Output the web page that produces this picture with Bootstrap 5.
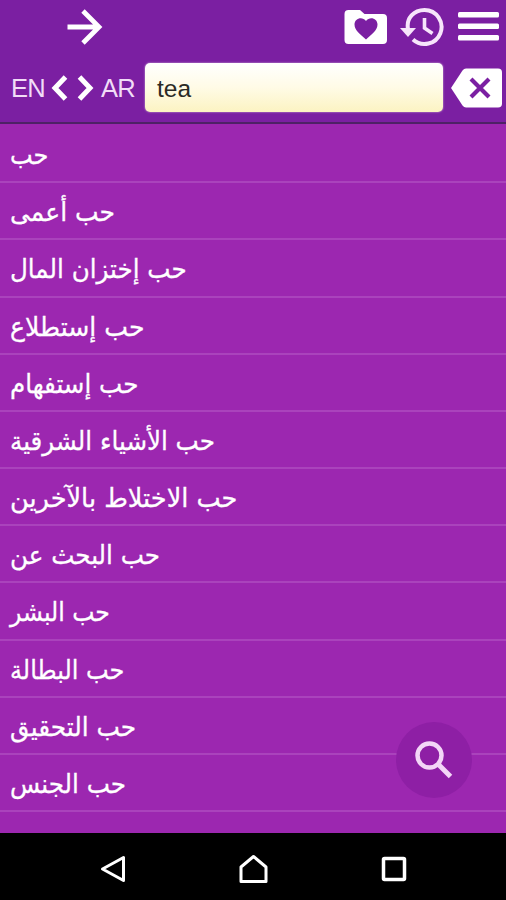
<!DOCTYPE html>
<html lang="en">
<head>
<meta charset="utf-8">
<meta name="viewport" content="width=device-width, initial-scale=1">
<title>Dictionary</title>
<link href="https://cdn.jsdelivr.net/npm/bootstrap@5.3.0/dist/css/bootstrap.min.css" rel="stylesheet">
<style>
body{background:#9c27b0;font-family:"Liberation Sans",Arial,sans-serif;height:900px;overflow:hidden}
.app-head{background:#7b1fa2;height:124px;border-bottom:2px solid #4e2166;flex:none}
.tools{height:54px;padding:0 6px 0 66px;gap:12px}
.searchrow{height:67px;padding:0 4px 0 11px}
.lang{color:#f1dcf7;font-size:25.500px;letter-spacing:-.7px;line-height:50px}
.query{width:298px;height:49px;border:0;border-radius:5px;padding:3px 12px 0;font-size:24.500px;line-height:46px;color:#2b2b26;background:linear-gradient(#fff,#fffbe6 50%,#fcf3c2);box-shadow:0 0 2px #d9c4dc}
.words{padding-top:2px}
.words .word{height:57.18px;padding:2px 10px 0;background:transparent;color:#fff;border:0;border-bottom:2px solid #aa43bc;border-radius:0;font-family:"DejaVu Sans",sans-serif;font-size:26px;line-height:55px;white-space:nowrap;-webkit-text-stroke:.3px #fff}
.word span{display:inline-block;transform-origin:0 50%;transform:scaleX(var(--fit,.945))}
.word:nth-child(1){--fit:.925}
.word:nth-child(2){--fit:.96}
.word:nth-child(4){--fit:.967}
.word:nth-child(7){--fit:.984}
.word:nth-child(9){--fit:.905}
.word:nth-child(10){--fit:.923}
.word:nth-child(11){--fit:.953}
.fab{left:396px;top:722px;width:76px;height:76px;background:#8e1fa5;border:0}
.sysbar{background:#000;height:67px;padding:5px 99px 0 99px;flex:none}
svg{display:block;flex:none}
</style>
<script src="https://cdn.jsdelivr.net/npm/bootstrap@5.3.0/dist/js/bootstrap.bundle.min.js"></script>
</head>
<body class="d-flex flex-column m-0 position-relative">
<header class="app-head">
  <div class="tools d-flex align-items-center">
    <svg width="38" height="38" viewBox="0 0 38 38" fill="none" stroke="#fff" stroke-width="4.8"><path d="M1.500 19H33M17 3l16 16-16 16"/></svg>
    <svg class="ms-auto" width="44" height="36" viewBox="0 0 44 36"><path d="M4.500 1H16l4.500 4H39q4 0 4 4v22q0 4-4 4H4.500q-4 0-4-4V5q0-4 4-4z" fill="#fff"/><path d="M22 30.500C17 26 10.500 21.500 10.500 15.500c0-6.500 8-8.500 11.500-3.500 3.500-5 11.500-3 11.500 3.500C33.500 21.500 27 26 22 30.500z" fill="#7b1fa2"/></svg>
    <svg width="46" height="40" viewBox="0 0 46 40" fill="none" stroke="#f7e5fb" stroke-width="4"><path d="M8 22C6 11 14 3 24.500 3A17 17 0 1 1 13 32.500"/><path d="M0 21h16l-8 9z" fill="#f7e5fb" stroke="none"/><path d="M24.500 11v10l8 5.500" stroke-width="3.600"/></svg>
    <svg width="42" height="30" viewBox="0 0 42 30" fill="#fff"><rect x="0" y="0" width="41" height="5.500" rx="1.500"/><rect x="0" y="11.500" width="41" height="5.500" rx="1.500"/><rect x="0" y="23" width="41" height="5.500" rx="1.500"/></svg>
  </div>
  <div class="searchrow d-flex align-items-center">
    <span class="lang">EN</span>
    <svg class="mx-1" width="48" height="26" viewBox="0 0 48 26" fill="none" stroke="#fff" stroke-width="5"><path d="M16.500 2L6 13l10.500 11M30.500 2L41 13 30.500 24"/></svg>
    <span class="lang">AR</span>
    <div class="query ms-auto">tea</div>
    <svg class="ms-2" width="51" height="40" viewBox="0 0 51 40"><path d="M15 .5H47q4 0 4 4v31q0 4-4 4H15q-2 0-3.500-2L0 20 11.500 2.500Q13 .5 15 .5z" fill="#fff"/><path d="M20 11l18 18M38 11L20 29" stroke="#7b1fa2" stroke-width="4.200"/></svg>
  </div>
</header>
<main class="words list-group list-group-flush flex-grow-1 rounded-0">
  <div class="list-group-item word"><span dir="rtl">حب</span></div>
  <div class="list-group-item word"><span dir="rtl">حب أعمى</span></div>
  <div class="list-group-item word"><span dir="rtl">حب إختزان المال</span></div>
  <div class="list-group-item word"><span dir="rtl">حب إستطلاع</span></div>
  <div class="list-group-item word"><span dir="rtl">حب إستفهام</span></div>
  <div class="list-group-item word"><span dir="rtl">حب الأشياء الشرقية</span></div>
  <div class="list-group-item word"><span dir="rtl">حب الاختلاط بالآخرين</span></div>
  <div class="list-group-item word"><span dir="rtl">حب البحث عن</span></div>
  <div class="list-group-item word"><span dir="rtl">حب البشر</span></div>
  <div class="list-group-item word"><span dir="rtl">حب البطالة</span></div>
  <div class="list-group-item word"><span dir="rtl">حب التحقيق</span></div>
  <div class="list-group-item word border-bottom-last"><span dir="rtl">حب الجنس</span></div>
  <div class="list-group-item bg-transparent border-0 p-0"></div>
</main>
<button class="fab btn rounded-circle position-absolute p-0 d-flex align-items-center justify-content-center" aria-label="Search">
  <svg width="38" height="38" viewBox="0 0 38 38" fill="none" stroke="#f3d6f7"><circle cx="14.500" cy="14.500" r="12" stroke-width="4.500"/><path d="M23.500 23.500l12 12" stroke-width="5"/></svg>
</button>
<nav class="sysbar d-flex justify-content-between align-items-center">
  <svg width="28" height="30" viewBox="0 0 28 30" fill="none" stroke="#fff" stroke-width="3" stroke-linejoin="round"><path d="M24.500 3.500v23L3.500 15z"/></svg>
  <svg width="30" height="30" viewBox="0 0 30 30" fill="none" stroke="#fff" stroke-width="3" stroke-linejoin="round"><path d="M2 27.500V13L14.500 2.500 27 13v14.500z"/></svg>
  <svg width="26" height="26" viewBox="0 0 26 26" fill="none" stroke="#fff" stroke-width="3.500"><rect x="2.500" y="2.500" width="21" height="21" rx="1"/></svg>
</nav>
</body>
</html>
